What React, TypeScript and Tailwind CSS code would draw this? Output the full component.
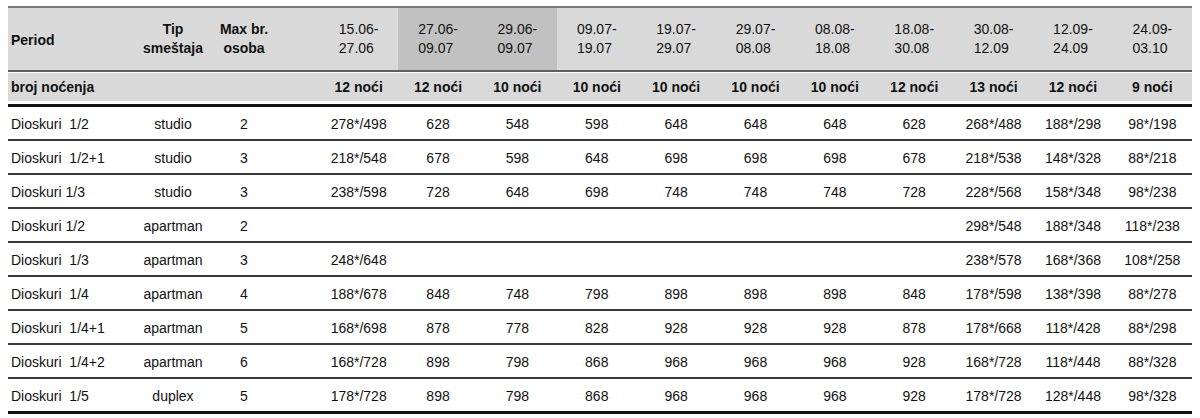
import React from "react";

const PERIODS = [
  ["15.06-", "27.06"],
  ["27.06-", "09.07"],
  ["29.06-", "09.07"],
  ["09.07-", "19.07"],
  ["19.07-", "29.07"],
  ["29.07-", "08.08"],
  ["08.08-", "18.08"],
  ["18.08-", "30.08"],
  ["30.08-", "12.09"],
  ["12.09-", "24.09"],
  ["24.09-", "03.10"],
];

const NIGHTS = [12, 12, 10, 10, 10, 10, 10, 12, 13, 12, 9];

const ROWS: { name: string; type: string; max: string; prices: string[] }[] = [
  { name: "Dioskuri\u00a0 1/2", type: "studio", max: "2", prices: ["278*/498", "628", "548", "598", "648", "648", "648", "628", "268*/488", "188*/298", "98*/198"] },
  { name: "Dioskuri\u00a0 1/2+1", type: "studio", max: "3", prices: ["218*/548", "678", "598", "648", "698", "698", "698", "678", "218*/538", "148*/328", "88*/218"] },
  { name: "Dioskuri 1/3", type: "studio", max: "3", prices: ["238*/598", "728", "648", "698", "748", "748", "748", "728", "228*/568", "158*/348", "98*/238"] },
  { name: "Dioskuri 1/2", type: "apartman", max: "2", prices: ["", "", "", "", "", "", "", "", "298*/548", "188*/348", "118*/238"] },
  { name: "Dioskuri\u00a0 1/3", type: "apartman", max: "3", prices: ["248*/648", "", "", "", "", "", "", "", "238*/578", "168*/368", "108*/258"] },
  { name: "Dioskuri\u00a0 1/4", type: "apartman", max: "4", prices: ["188*/678", "848", "748", "798", "898", "898", "898", "848", "178*/598", "138*/398", "88*/278"] },
  { name: "Dioskuri\u00a0 1/4+1", type: "apartman", max: "5", prices: ["168*/698", "878", "778", "828", "928", "928", "928", "878", "178*/668", "118*/428", "88*/298"] },
  { name: "Dioskuri\u00a0 1/4+2", type: "apartman", max: "6", prices: ["168*/728", "898", "798", "868", "968", "968", "968", "928", "168*/728", "118*/448", "88*/328"] },
  { name: "Dioskuri\u00a0 1/5", type: "duplex", max: "5", prices: ["178*/728", "898", "798", "868", "968", "968", "968", "928", "178*/728", "128*/448", "98*/328"] },
];

const GRID = "grid grid-cols-[128px_74px_68px_41px_repeat(11,minmax(0,1fr))]";

export default function App() {
  return (
    <div className="min-h-screen bg-white pt-[6px] pl-[8px] font-['Liberation_Sans',Arial,sans-serif] text-[14px] text-[#111]">
      <div className="w-[1184px]">
        {/* header */}
        <div className={`${GRID} h-[66px] border-y-2 border-t-[#7a7a7a] border-b-[#5e5e5e] bg-[#d9d9d9] font-bold leading-[19px]`}>
          <div className="flex items-center pl-[3px] pt-[2px]">Period</div>
          <div className="flex items-center justify-center text-center">
            Tip
            <br />
            smeštaja
          </div>
          <div className="flex items-center justify-center text-center">
            Max br.
            <br />
            osoba
          </div>
          <div />
          {PERIODS.map((p, i) => (
            <div
              key={i}
              className={`flex items-center justify-center font-normal ${i === 1 || i === 2 ? "bg-[#c1c1c1]" : ""}`}
            >
              <span className="inline-block text-left">
                {p[0]}
                <br />
                {p[1]}
              </span>
            </div>
          ))}
        </div>

        {/* broj nocenja */}
        <div className={`${GRID} mt-[1px] h-[28px] bg-[#d9d9d9] font-bold`}>
          <div className="flex items-end pb-[3px] pl-[3px]">broj noćenja</div>
          <div />
          <div />
          <div />
          {NIGHTS.map((n, i) => (
            <div key={i} className="flex items-end justify-center pb-[3px]">
              {n} noći
            </div>
          ))}
        </div>
        <div className="mt-[3px] h-[3px] bg-[#111]" />

        {/* data */}
        {ROWS.map((r, ri) => (
          <div
            key={ri}
            className={`${GRID} ${ri === ROWS.length - 1 ? "h-[35px] border-b-[3px] border-[#111]" : "h-[34px] border-b-2 border-[#3a3a3a]"}`}
          >
            <div className="flex items-center pl-[3px] pt-[2px]">{r.name}</div>
            <div className="flex items-center justify-center pt-[2px]">{r.type}</div>
            <div className="flex items-center justify-center pt-[2px]">{r.max}</div>
            <div />
            {r.prices.map((v, i) => (
              <div key={i} className="flex items-center justify-center pt-[3px]">
                {v}
              </div>
            ))}
          </div>
        ))}
      </div>
    </div>
  );
}
